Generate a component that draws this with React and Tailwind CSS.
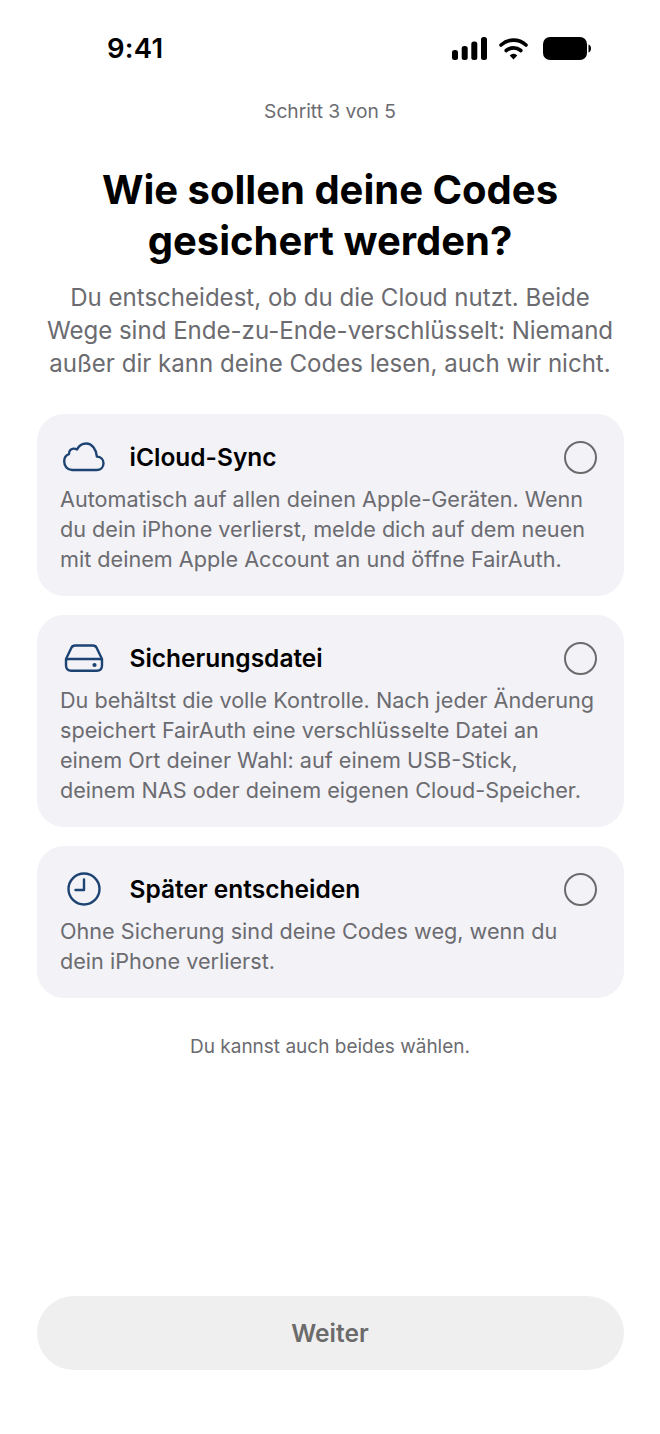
const fontStack = { fontFamily: 'Inter, "Noto Sans", sans-serif' }

function CloudIcon() {
  return (
    <svg width="42" height="30" viewBox="0 0 42 30" fill="none" stroke="#1d4373" strokeWidth="2.4" strokeLinejoin="round">
      <path d="M9 28h24.500c4.200 0 7-2.800 7-6.800 0-3.700-2.800-6.500-6.600-6.600C33.200 7.400 29 1.500 23.200 1.500c-4.200 0-7.400 2.400-9.200 6-1.200-.7-2.400-1-3.600-.9-2.600.3-4.400 2.500-4.400 5.500-3 1-4.800 3.400-4.800 7.100C1.200 24.300 4.400 28 9 28z" />
    </svg>
  )
}

function DriveIcon() {
  return (
    <svg width="40" height="29" viewBox="0 0 40 29" fill="none" stroke="#1d4373" strokeWidth="2.4" strokeLinejoin="round">
      <path d="M11 1.500h18c1.700 0 2.900.8 3.600 2.200L38 15v6.500c0 3.200-2 5.200-5.200 5.200H7.200c-3.200 0-5.200-2-5.200-5.200V15L7.400 3.700C8.100 2.300 9.300 1.500 11 1.500z" />
      <path d="M2.500 15.500c.8-.3 1.600-.5 2.500-.5h30c.9 0 1.700.2 2.500.5" />
      <circle cx="30.500" cy="21" r="2.100" fill="#1d4373" stroke="none" />
    </svg>
  )
}

function ClockIcon() {
  return (
    <svg width="34" height="34" viewBox="0 0 34 34" fill="none" stroke="#1d4373" strokeWidth="2.4" strokeLinecap="round" strokeLinejoin="round">
      <circle cx="17" cy="17" r="15.500" />
      <path d="M17 7.500V18H8.500" />
    </svg>
  )
}

function StatusBar() {
  return (
    <div className="flex h-[97px] items-center justify-between pl-[107px] pr-[69px] text-black">
      <span className="text-[27.500px] font-semibold tracking-[0.2px]">9:41</span>
      <div className="flex items-center">
        <svg width="35" height="23" viewBox="0 0 35 23" fill="black">
          <rect x="0" y="13" width="6" height="10" rx="2.500" />
          <rect x="9.700" y="9" width="6" height="14" rx="2.500" />
          <rect x="19.300" y="4.500" width="6" height="18.500" rx="2.500" />
          <rect x="29" y="0" width="6" height="23" rx="2.500" />
        </svg>
        <svg className="ml-[12px]" width="29" height="24" viewBox="0 0 29 24" fill="none" stroke="black" strokeWidth="3.600" strokeLinecap="round">
          <path d="M2 8C9.300 1.500 19.700 1.500 27 8" />
          <path d="M7.200 13.500c4.300-3.500 10.300-3.500 14.600 0" />
          <path d="M11.800 18.500c1.700-1.200 3.800-1.200 5.400 0l-2.700 2.900z" fill="black" stroke="black" strokeWidth="1.500" />
        </svg>
        <svg className="ml-[15px]" width="48" height="23" viewBox="0 0 48 23" fill="black">
          <rect x="0" y="0" width="44" height="23" rx="7" />
          <path d="M45.500 7.500c1.600.5 2.500 2 2.500 4s-.9 3.500-2.500 4z" />
        </svg>
      </div>
    </div>
  )
}

const options = [
  {
    icon: <CloudIcon />,
    title: "iCloud-Sync",
    lines: [
      "Automatisch auf allen deinen Apple-Geräten. Wenn",
      "du dein iPhone verlierst, melde dich auf dem neuen",
      "mit deinem Apple Account an und öffne FairAuth.",
    ],
  },
  {
    icon: <DriveIcon />,
    title: "Sicherungsdatei",
    lines: [
      "Du behältst die volle Kontrolle. Nach jeder Änderung",
      "speichert FairAuth eine verschlüsselte Datei an",
      "einem Ort deiner Wahl: auf einem USB-Stick,",
      "deinem NAS oder deinem eigenen Cloud-Speicher.",
    ],
  },
  {
    icon: <ClockIcon />,
    title: "Später entscheiden",
    lines: [
      "Ohne Sicherung sind deine Codes weg, wenn du",
      "dein iPhone verlierst.",
    ],
  },
]

export default function App() {
  return (
    <div className="flex h-[1434px] w-[660px] flex-col overflow-hidden bg-white" style={fontStack}>
      <StatusBar />

      <p className="mt-[2px] text-center text-[19.200px] leading-[24px] text-[#6b6b70]">Schritt 3 von 5</p>

      <h1 className="mt-[41px] text-center text-[40px] font-bold leading-[51px] text-black">
        Wie sollen deine Codes
        <br />
        gesichert werden?
      </h1>

      <p className="mt-[15px] text-center text-[24.050px] leading-[33px] text-[#6b6b70]">
        Du entscheidest, ob du die Cloud nutzt. Beide
        <br />
        Wege sind Ende-zu-Ende-verschlüsselt: Niemand
        <br />
        außer dir kann deine Codes lesen, auch wir nicht.
      </p>

      <div className="mx-[36.500px] mt-[34px] flex flex-col gap-[19px]">
        {options.map((option) => (
          <div key={option.title} className="rounded-[27px] bg-[#f2f2f7] pb-[22px] pl-[23.500px] pr-[26.500px] pt-[25px]">
            <div className="flex h-[36px] items-center justify-between">
              <div className="flex items-center">
                <div className="mr-[22.500px] flex w-[47px] items-center justify-center">{option.icon}</div>
                <span className="text-[24.500px] font-semibold text-black">{option.title}</span>
              </div>
              <div className="h-[33px] w-[33px] rounded-full border-[2.500px] border-[#6b6b6b]" />
            </div>
            <p className="mt-[9px] text-[21.630px] leading-[30px] text-[#6b6b70]">
              {option.lines.map((line) => (
                <span key={line} className="block whitespace-nowrap">{line}</span>
              ))}
            </p>
          </div>
        ))}
      </div>

      <p className="mt-[37px] text-center text-[19px] leading-[24px] text-[#6b6b70]">Du kannst auch beides wählen.</p>

      <div className="mx-[36.500px] mb-[64px] mt-auto flex h-[74px] items-center justify-center rounded-full bg-[#efefef] pt-[1px]">
        <span className="text-[24.500px] font-semibold text-[#6b6b6b]">Weiter</span>
      </div>
    </div>
  )
}
